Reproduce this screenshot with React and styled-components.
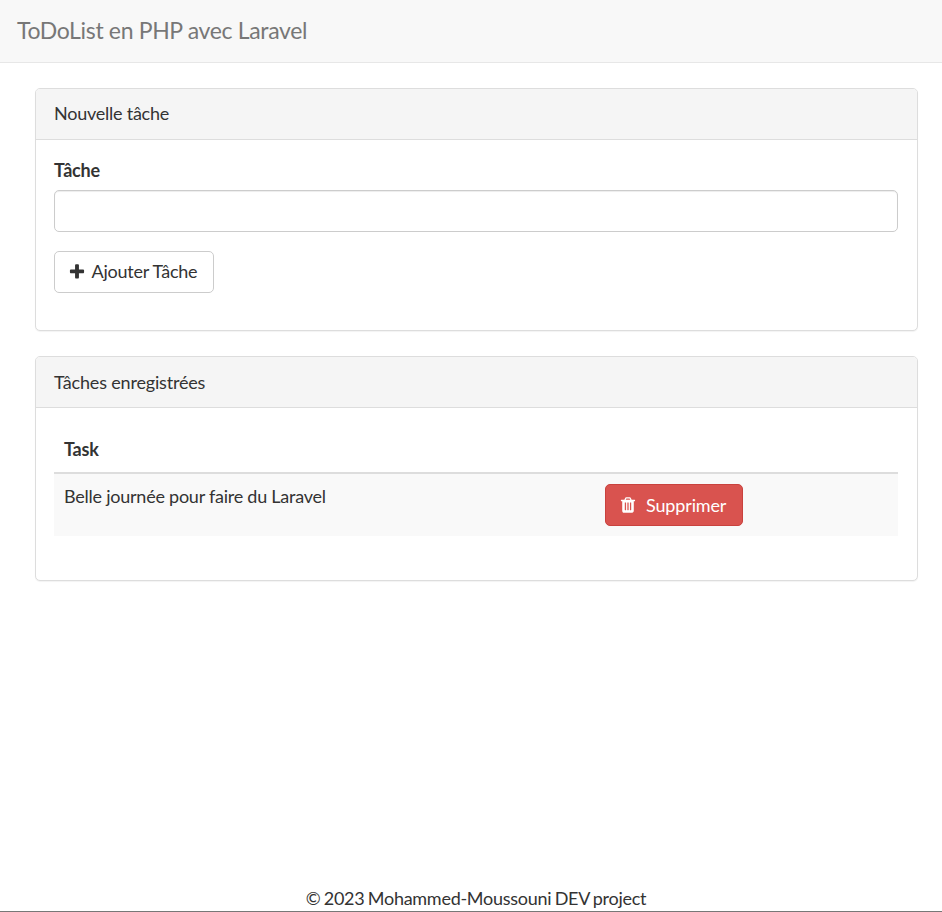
import React from "react";
import styled, { createGlobalStyle } from "styled-components";

const GlobalStyle = createGlobalStyle`
  *, *::before, *::after { box-sizing: border-box; }
  html { overflow: hidden; }
  body {
    margin: 0;
    background: #fff;
    color: #333;
    font-family: Lato, sans-serif;
    font-size: 18px;
    letter-spacing: -0.24px;
    line-height: 25px;
  }
`;

const Page = styled.div`
  display: flex;
  flex-direction: column;
  height: 912px;
  border-bottom: 1px solid #777;
`;

const Navbar = styled.nav`
  display: flex;
  align-items: center;
  height: 63px;
  padding: 0 17px 1px;
  background: #f8f8f8;
  border-bottom: 1px solid #e7e7e7;
`;

const Brand = styled.span`
  color: #777;
  font-size: 23px;
  letter-spacing: -0.34px;
`;

const Content = styled.main`
  display: flex;
  flex: 1;
  flex-direction: column;
  gap: 25px;
  padding: 25px 24px 0 35px;
`;

const Panel = styled.section`
  height: ${({ $height }) => $height}px;
  border: 1px solid #ddd;
  border-radius: 5px;
  background: #fff;
  box-shadow: 0 1px 1px rgba(0, 0, 0, 0.05);
`;

const PanelHeading = styled.header`
  height: 51px;
  padding: ${({ $top = 12 }) => $top}px 18px 0;
  background: #f5f5f5;
  border-bottom: 1px solid #ddd;
  border-radius: 4px 4px 0 0;
  letter-spacing: ${({ $spacing = -0.24 }) => $spacing}px;
`;

const PanelBody = styled.div`
  padding: 17px 19px 0 18px;
`;

const Label = styled.label`
  display: block;
  padding-top: 1px;
  margin-bottom: 7px;
  font-weight: 700;
`;

const TextInput = styled.input`
  display: block;
  width: 100%;
  height: 42px;
  margin-bottom: 19px;
  padding: 7px 15px;
  border: 1px solid #ccc;
  border-radius: 5px;
  background: #fff;
  box-shadow: inset 0 1px 1px rgba(0, 0, 0, 0.075);
  color: #555;
  font: inherit;
`;

const Button = styled.button`
  display: inline-flex;
  align-items: center;
  gap: ${({ $gap }) => $gap}px;
  width: ${({ $width }) => $width}px;
  height: 42px;
  padding: 0 0 ${({ $danger }) => ($danger ? 0 : 1)}px 13px;
  border: 1px solid ${({ $danger }) => ($danger ? "#c9423e" : "#ccc")};
  border-radius: 5px;
  background: ${({ $danger }) => ($danger ? "#d9534f" : "#fff")};
  color: ${({ $danger }) => ($danger ? "#fff" : "#333")};
  font: inherit;
  letter-spacing: ${({ $danger }) => ($danger ? -0.14 : -0.24)}px;
  white-space: nowrap;
`;

const Glyph = styled.svg`
  width: 18px;
  height: 18px;
  flex: none;
  fill: currentColor;
`;

const Table = styled.table`
  width: 100%;
  border-collapse: collapse;
  table-layout: fixed;
`;

const HeadCell = styled.th`
  width: ${({ $width }) => $width};
  height: 48px;
  padding: 1px 10px 0;
  border-bottom: 2px solid #ddd;
  text-align: left;
  vertical-align: middle;
`;

const Cell = styled.td`
  height: 62px;
  padding: 10px;
  background: #f9f9f9;
  vertical-align: top;
`;

const Footer = styled.footer`
  padding: 0 0 0 10px;
  letter-spacing: -0.27px;
  word-spacing: -1px;
  text-align: center;
`;

const PLUS =
  "M1600 736v192q0 40-28 68t-68 28h-416v416q0 40-28 68t-68 28h-192q-40 0-68-28t-28-68v-416h-416q-40 0-68-28t-28-68v-192q0-40 28-68t68-28h416v-416q0-40 28-68t68-28h192q40 0 68 28t28 68v416h416q40 0 68 28t28 68z";
const TRASH =
  "M704 1376v-704q0-14-9-23t-23-9h-64q-14 0-23 9t-9 23v704q0 14 9 23t23 9h64q14 0 23-9t9-23zm256 0v-704q0-14-9-23t-23-9h-64q-14 0-23 9t-9 23v704q0 14 9 23t23 9h64q14 0 23-9t9-23zm256 0v-704q0-14-9-23t-23-9h-64q-14 0-23 9t-9 23v704q0 14 9 23t23 9h64q14 0 23-9t9-23zm-544-992h448l-48-117q-7-9-17-11h-317q-10 2-17 11zm928 32v64q0 14-9 23t-23 9h-96v948q0 83-47 143.500t-113 60.500h-832q-66 0-113-58.500t-47-141.500v-952h-96q-14 0-23-9t-9-23v-64q0-14 9-23t23-9h309l70-167q15-37 54-63t79-26h320q40 0 79 26t54 63l70 167h309q14 0 23 9t9 23z";

function Icon({ path }) {
  return (
    <Glyph viewBox="0 0 1792 1792" aria-hidden="true">
      <path d={path} />
    </Glyph>
  );
}

const tasks = ["Belle journée pour faire du Laravel"];

export default function App() {
  return (
    <Page>
      <GlobalStyle />
      <Navbar>
        <Brand>ToDoList en PHP avec Laravel</Brand>
      </Navbar>
      <Content>
        <Panel $height={243}>
          <PanelHeading>Nouvelle tâche</PanelHeading>
          <PanelBody>
            <Label htmlFor="task">Tâche</Label>
            <TextInput id="task" />
            <Button type="button" $width={160} $gap={5.5}>
              <Icon path={PLUS} />
              Ajouter Tâche
            </Button>
          </PanelBody>
        </Panel>
        <Panel $height={225}>
          <PanelHeading $top={13} $spacing={-0.18}>
            Tâches enregistrées
          </PanelHeading>
          <PanelBody>
            <Table>
              <thead>
                <tr>
                  <HeadCell $width="541px">Task</HeadCell>
                  <HeadCell />
                </tr>
              </thead>
              <tbody>
                {tasks.map((task) => (
                  <tr key={task}>
                    <Cell>{task}</Cell>
                    <Cell>
                      <Button type="button" $danger $width={138} $gap={9}>
                        <Icon path={TRASH} />
                        Supprimer
                      </Button>
                    </Cell>
                  </tr>
                ))}
              </tbody>
            </Table>
          </PanelBody>
        </Panel>
      </Content>
      <Footer>© 2023 Mohammed-Moussouni DEV project</Footer>
    </Page>
  );
}
